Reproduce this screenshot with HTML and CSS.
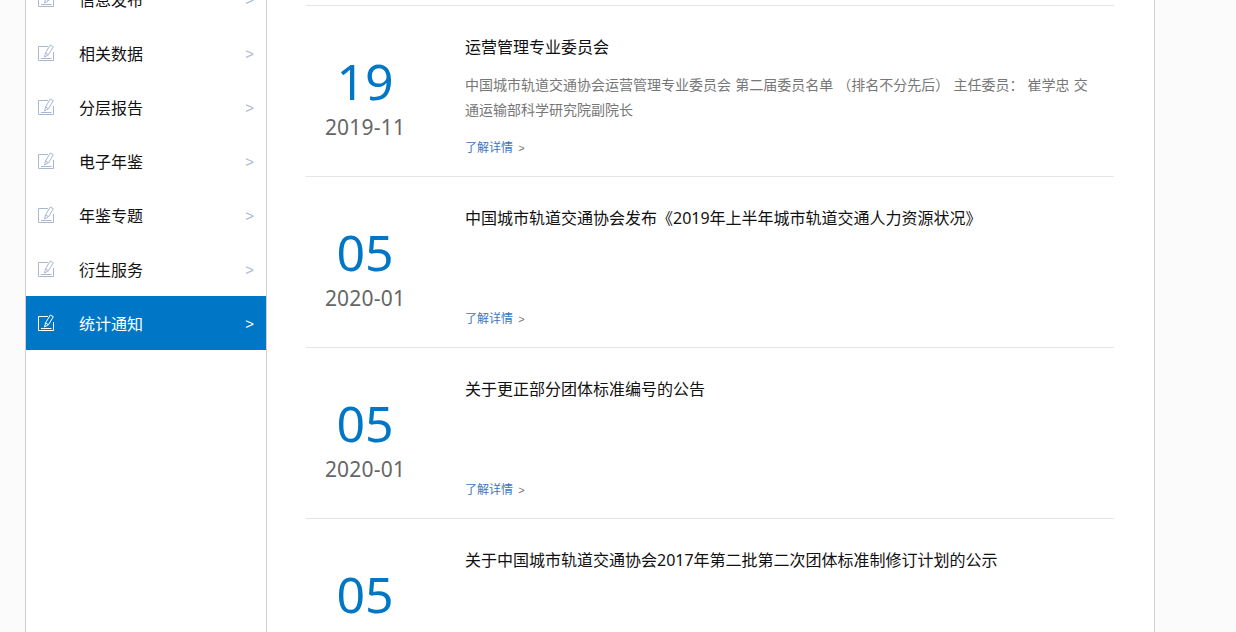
FILE: index.html
```html
<!DOCTYPE html>
<html lang="zh">
<head>
<meta charset="utf-8">
<title>统计通知</title>
<link rel="stylesheet" href="styles.css">
</head>
<body>
<svg class="sprite" width="0" height="0" aria-hidden="true">
  <symbol id="edit" viewBox="0 0 16 17">
    <path d="M10 2.500H0.500V16.500H15.500V8" fill="none" stroke="currentColor"/>
    <path d="M3 14.500H13.500" fill="none" stroke="currentColor"/>
    <path d="M6.500 13L7.500 9L12.300 1L15.300 2.700L10.500 10.700Z" fill="none" stroke="currentColor"/>
    <path d="M7.500 9L10.500 10.700" fill="none" stroke="currentColor"/>
  </symbol>
</svg>
<div class="page">
  <aside class="side">
    <a class="nav"><svg class="ico"><use href="#edit"/></svg><span class="nav-t">信息发布</span><span class="gt">&gt;</span></a>
    <a class="nav"><svg class="ico"><use href="#edit"/></svg><span class="nav-t">相关数据</span><span class="gt">&gt;</span></a>
    <a class="nav"><svg class="ico"><use href="#edit"/></svg><span class="nav-t">分层报告</span><span class="gt">&gt;</span></a>
    <a class="nav"><svg class="ico"><use href="#edit"/></svg><span class="nav-t">电子年鉴</span><span class="gt">&gt;</span></a>
    <a class="nav"><svg class="ico"><use href="#edit"/></svg><span class="nav-t">年鉴专题</span><span class="gt">&gt;</span></a>
    <a class="nav"><svg class="ico"><use href="#edit"/></svg><span class="nav-t">衍生服务</span><span class="gt">&gt;</span></a>
    <a class="nav on"><svg class="ico"><use href="#edit"/></svg><span class="nav-t">统计通知</span><span class="gt">&gt;</span></a>
  </aside>
  <main class="main">
    <article class="row">
      <div class="date"><div class="day">19</div><div class="ym">2019-11</div></div>
      <div class="body">
        <h3 class="tit">运营管理专业委员会</h3>
        <p class="desc">中国城市轨道交通协会运营管理专业委员会 第二届委员名单 （排名不分先后） 主任委员： 崔学忠 交通运输部科学研究院副院长</p>
        <a class="more">了解详情 <i>&gt;</i></a>
      </div>
    </article>
    <article class="row">
      <div class="date"><div class="day">05</div><div class="ym">2020-01</div></div>
      <div class="body">
        <h3 class="tit">中国城市轨道交通协会发布《2019年上半年城市轨道交通人力资源状况》</h3>
        <p class="desc"></p>
        <a class="more">了解详情 <i>&gt;</i></a>
      </div>
    </article>
    <article class="row">
      <div class="date"><div class="day">05</div><div class="ym">2020-01</div></div>
      <div class="body">
        <h3 class="tit">关于更正部分团体标准编号的公告</h3>
        <p class="desc"></p>
        <a class="more">了解详情 <i>&gt;</i></a>
      </div>
    </article>
    <article class="row">
      <div class="date"><div class="day">05</div><div class="ym">2020-01</div></div>
      <div class="body">
        <h3 class="tit">关于中国城市轨道交通协会2017年第二批第二次团体标准制修订计划的公示</h3>
        <p class="desc"></p>
        <a class="more">了解详情 <i>&gt;</i></a>
      </div>
    </article>
  </main>
</div>
</body>
</html>
```
FILE: styles.css
```css
* { box-sizing: border-box; }
html, body { margin: 0; height: 632px; overflow: hidden; }
body {
  background: #fbfbfb;
  font-family: "Noto Sans", "Noto Sans CJK SC", sans-serif;
  color: #000;
}
.sprite { display: block; }
.page {
  display: flex;
  width: 1130px;
  height: 900px;
  margin: -28px 0 0 25px;
  background: #fff;
  border-left: 1px solid #cfcfcf;
  border-right: 1px solid #cfcfcf;
}
.side {
  flex: 0 0 241px;
  border-right: 1px solid #cfcfcf;
}
.nav {
  display: flex;
  align-items: center;
  height: 54px;
  padding: 0 12px 0 12px;
  color: #a9b7d1;
}
.ico { width: 16px; height: 17px; flex: none; color: #a9b7d1; margin-top: -1px; }
.nav-t {
  flex: 1;
  margin-left: 25px;
  padding-top: 1px;
  font-size: 16px;
  line-height: 20px;
  color: #111;
}
.gt { font-size: 15px; line-height: 16px; margin-top: 2px; font-family: "Liberation Sans", sans-serif; }
.on { background: #0077c6; color: #fff; }
.on .ico { color: #fff; }
.on .nav-t { color: #fff; }
.main {
  flex: 1;
  padding: 33px 40px 0 39px;
}
.row {
  display: flex;
  height: 171px;
  border-top: 1px solid #e5e5e5;
}
.date { flex: 0 0 118px; text-align: center; padding-top: 45px; margin-right: 41px; }
.day { font-size: 50px; line-height: 60px; color: #0077c6; }
.ym { font-size: 21px; line-height: 28px; letter-spacing: 0.2px; color: #666; margin-top: 2px; }
.body { flex: 1; display: flex; flex-direction: column; padding-top: 28px; }
.tit { margin: 0; font-size: 16px; font-weight: 400; line-height: 26px; color: #111; }
.desc {
  flex: 0 0 50px;
  width: 630px;
  margin: 12px 0 0;
  font-size: 14px;
  line-height: 25px;
  word-spacing: 0.5px;
  color: #777;
}
.more { margin-top: 16px; font-size: 12px; line-height: 20px; color: #3d75c0; }
.more i { font-style: normal; font-size: 11px; margin-left: 2px; color: #777; font-family: "Liberation Sans", sans-serif; }
```
